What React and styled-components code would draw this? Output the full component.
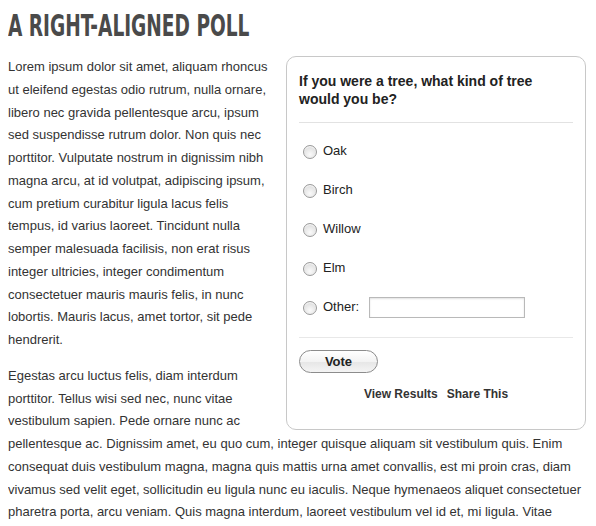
import React from "react";
import styled, { createGlobalStyle } from "styled-components";

const Global = createGlobalStyle`
  html, body { margin: 0; padding: 0; background: #fff; }
  body { margin: 8px; font-family: "Liberation Sans", Arial, sans-serif; color: #333; }
`;

const Title = styled.h1`
  margin: 0 0 14px;
  font-family: "DejaVu Sans Condensed", "Liberation Sans", sans-serif;
  font-stretch: condensed;
  font-weight: 700;
  font-size: 31px;
  line-height: 34px;
  color: #4a4a4a;
  text-transform: uppercase;
`;

const TitleText = styled.span`
  display: inline-block;
  transform: scaleX(0.665);
  transform-origin: 0 50%;
  white-space: nowrap;
`;

const Article = styled.div`
  font-size: 13px;
  line-height: 22.75px;
  color: #333;
`;

const Para = styled.p`
  margin: 0 0 13px;
`;

const Poll = styled.form`
  float: right;
  width: 274px;
  margin: 0 2px 0 16px;
  padding: 15px 12px 28px;
  border: 1px solid #c8c8c8;
  border-radius: 10px;
  background: #fff;
`;

const Question = styled.div`
  font-size: 14px;
  font-weight: 700;
  line-height: 18px;
  color: #222;
  padding-bottom: 14px;
  border-bottom: 1px solid #e2e2e2;
`;

const Options = styled.div`
  display: flex;
  flex-direction: column;
  padding: 9px 0 10px;
  border-bottom: 1px solid #e8e8e8;
`;

const Option = styled.label`
  display: flex;
  align-items: center;
  height: 39px;
  font-size: 13px;
  color: #222;
`;

const Radio = styled.span`
  box-sizing: border-box;
  width: 14px;
  height: 14px;
  margin: 0 6px 0 4px;
  border-radius: 50%;
  border: 1px solid #9a9a9a;
  background: radial-gradient(circle at 50% 70%, #fafafa 0%, #e6e6e6 55%, #cfcfcf 100%);
  box-shadow: inset 0 1px 1px rgba(255,255,255,0.9);
  flex: none;
`;

const TextInput = styled.input`
  box-sizing: border-box;
  width: 156px;
  height: 21px;
  margin-left: 10px;
  border: 1px solid #b9b9b9;
  box-shadow: inset 0 1px 2px rgba(0,0,0,0.12);
  padding: 2px 4px;
  font: 13px "Liberation Sans", Arial, sans-serif;
  outline: none;
`;

const Vote = styled.button`
  display: block;
  margin-top: 12px;
  width: 79px;
  height: 23px;
  border: 1px solid #8c8c8c;
  border-radius: 12px;
  background: linear-gradient(#ffffff, #f3f3f3 50%, #e6e6e6 51%, #f4f4f4);
  font: 700 13px "Liberation Sans", Arial, sans-serif;
  color: #222;
  padding: 0;
`;

const Links = styled.div`
  display: flex;
  justify-content: center;
  gap: 9px;
  margin-top: 14px;
  font-size: 12px;
  font-weight: 700;
  line-height: 14px;
`;

const Link = styled.a`
  color: #333;
  text-decoration: none;
`;

export default function App() {
  const options = ["Oak", "Birch", "Willow", "Elm"];
  return (
    <>
      <Global />
      <Title>
        <TitleText>A Right-Aligned Poll</TitleText>
      </Title>
      <Article>
        <Poll onSubmit={(e) => e.preventDefault()}>
          <Question>If you were a tree, what kind of tree would you be?</Question>
          <Options>
            {options.map((o) => (
              <Option key={o}>
                <Radio />
                {o}
              </Option>
            ))}
            <Option>
              <Radio />
              Other:
              <TextInput type="text" />
            </Option>
          </Options>
          <Vote type="submit">Vote</Vote>
          <Links>
            <Link href="#">View Results</Link>
            <Link href="#">Share This</Link>
          </Links>
        </Poll>
        <Para>
          Lorem ipsum dolor sit amet, aliquam rhoncus ut eleifend egestas odio rutrum, nulla ornare,
          libero nec gravida pellentesque arcu, ipsum sed suspendisse rutrum dolor. Non quis nec
          porttitor. Vulputate nostrum in dignissim nibh magna arcu, at id volutpat, adipiscing ipsum,
          cum pretium curabitur ligula lacus felis tempus, id varius laoreet. Tincidunt nulla semper
          malesuada facilisis, non erat risus integer ultricies, integer condimentum consectetuer
          mauris mauris felis, in nunc lobortis. Mauris lacus, amet tortor, sit pede hendrerit.
        </Para>
        <Para>
          Egestas arcu luctus felis, diam interdum porttitor. Tellus wisi sed nec, nunc vitae
          vestibulum sapien. Pede ornare nunc ac pellentesque ac. Dignissim amet, eu quo cum, integer
          quisque aliquam sit vestibulum quis. Enim consequat duis vestibulum magna, magna quis mattis
          urna amet convallis, est mi proin cras, diam vivamus sed velit eget, sollicitudin eu ligula
          nunc eu iaculis. Neque hymenaeos aliquet consectetuer pharetra porta, arcu veniam. Quis magna
          interdum, laoreet vestibulum vel id et, mi ligula. Vitae pellentesque lectus aliquam nec,
          dictum tempor urna vitae.
        </Para>
      </Article>
    </>
  );
}
